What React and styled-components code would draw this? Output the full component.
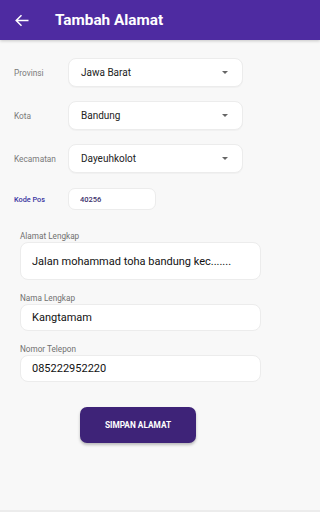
import React, { useState } from 'react';
import styled, { createGlobalStyle } from 'styled-components';

const GlobalStyle = createGlobalStyle`
  html, body {
    margin: 0;
    padding: 0;
    background: #f8f8f8;
    font-family: Roboto, "Liberation Sans", sans-serif;
  }
`;

const Screen = styled.div`
  width: 100%;
  min-width: 276px;
  height: 512px;
  background: #f8f8f8;
  display: flex;
  flex-direction: column;
  overflow: hidden;
`;

const Header = styled.div`
  height: 40px;
  flex-shrink: 0;
  background: #4e2ba1;
  display: flex;
  align-items: center;
  padding-left: 14px;
  box-shadow: 0 1px 3px rgba(0, 0, 0, 0.2);
`;

const BackButton = styled.button`
  background: none;
  border: none;
  padding: 0;
  width: 15px;
  height: 16px;
  display: flex;
  align-items: center;
  justify-content: center;
  margin-right: 26px;
`;

const Title = styled.h1`
  margin: 0;
  color: #fff;
  font-size: 15.3px;
  font-weight: 700;
`;

const Body = styled.div`
  flex: 1;
  width: 276px;
  display: flex;
  flex-direction: column;
  padding-top: 18px;
`;

const Row = styled.div`
  display: flex;
  align-items: center;
  padding-left: 14px;
  margin-bottom: ${(p) => p.gap || 14}px;
`;

const RowLabel = styled.label`
  width: 54px;
  font-size: ${(p) => (p.accent ? '7.3px' : '8.3px')};
  font-weight: ${(p) => (p.accent ? 500 : 400)};
  color: ${(p) => (p.accent ? '#3a33a0' : '#7a7a7a')};
`;

const SelectBox = styled.div`
  width: 175px;
  height: 29px;
  box-sizing: border-box;
  background: #fff;
  border: 1px solid #ececec;
  border-radius: 8px;
  display: flex;
  align-items: center;
  justify-content: space-between;
  padding: 0 14px 0 12px;
  font-size: 10px;
  color: #222;
  box-shadow: 0 1px 1px rgba(0, 0, 0, 0.03);
`;

const Caret = styled.span`
  width: 0;
  height: 0;
  border-left: 3.5px solid transparent;
  border-right: 3.5px solid transparent;
  border-top: 3.5px solid #666;
`;

const SmallInput = styled.input`
  width: 88px;
  height: 22px;
  box-sizing: border-box;
  background: #fff;
  border: 1px solid #ececec;
  border-radius: 7px;
  padding: 0 11px;
  font-family: inherit;
  font-size: 7.5px;
  font-weight: 500;
  color: #3a2f6a;
  outline: none;
`;

const Section = styled.div`
  padding: 0 15px 0 20px;
  display: flex;
  flex-direction: column;
`;

const Field = styled.div`
  display: flex;
  flex-direction: column;
  margin-bottom: ${(p) => p.gap || 0}px;
`;

const FieldLabel = styled.label`
  font-size: 8.2px;
  line-height: 10px;
  color: #707070;
  margin-bottom: 1px;
`;

const TextInput = styled.input`
  width: 100%;
  height: ${(p) => p.h || 27}px;
  box-sizing: border-box;
  background: #fff;
  border: 1px solid #ececec;
  border-radius: 8px;
  padding: 0 11px;
  font-family: inherit;
  font-size: 11px;
  color: #111;
  outline: none;
`;

const ButtonWrap = styled.div`
  display: flex;
  padding-left: 80px;
  margin-top: 25px;
`;

const SaveButton = styled.button`
  width: 116px;
  height: 36px;
  background: #3e2378;
  color: #fff;
  border: none;
  border-radius: 7px;
  font-family: inherit;
  font-size: 8.3px;
  font-weight: 700;
  box-shadow: 0 2px 3px rgba(0, 0, 0, 0.25);
`;

const BottomEdge = styled.div`
  height: 2px;
  background: #ececec;
  flex-shrink: 0;
`;

const Select = ({ value }) => (
  <SelectBox>
    <span>{value}</span>
    <Caret />
  </SelectBox>
);

const App = () => {
  const [form, setForm] = useState({
    kode_pos: '40256',
    alamat: 'Jalan mohammad toha bandung kec.......',
    nama: 'Kangtamam',
    telepon: '085222952220',
  });

  const handleChange = (e) => {
    setForm({ ...form, [e.target.name]: e.target.value });
  };

  return (
    <Screen>
      <GlobalStyle />
      <Header>
        <BackButton title="Kembali">
          <svg width="14" height="13" viewBox="0 0 14 13" fill="none">
            <path d="M13.5 6.5H1.5M6.5 1.2L1.2 6.5l5.3 5.3" stroke="#fff" strokeWidth="1.5" />
          </svg>
        </BackButton>
        <Title>Tambah Alamat</Title>
      </Header>
      <Body>
        <Row>
          <RowLabel>Provinsi</RowLabel>
          <Select value="Jawa Barat" />
        </Row>
        <Row>
          <RowLabel>Kota</RowLabel>
          <Select value="Bandung" />
        </Row>
        <Row gap={15}>
          <RowLabel>Kecamatan</RowLabel>
          <Select value="Dayeuhkolot" />
        </Row>
        <Row gap={21}>
          <RowLabel accent>Kode Pos</RowLabel>
          <SmallInput name="kode_pos" value={form.kode_pos} onChange={handleChange} />
        </Row>

        <Section>
          <Field gap={13}>
            <FieldLabel>Alamat Lengkap</FieldLabel>
            <TextInput h={38} name="alamat" value={form.alamat} onChange={handleChange} />
          </Field>
          <Field gap={13}>
            <FieldLabel>Nama Lengkap</FieldLabel>
            <TextInput name="nama" value={form.nama} onChange={handleChange} />
          </Field>
          <Field>
            <FieldLabel>Nomor Telepon</FieldLabel>
            <TextInput name="telepon" value={form.telepon} onChange={handleChange} />
          </Field>
        </Section>

        <ButtonWrap>
          <SaveButton>SIMPAN ALAMAT</SaveButton>
        </ButtonWrap>
      </Body>
      <BottomEdge />
    </Screen>
  );
};

export default App;
